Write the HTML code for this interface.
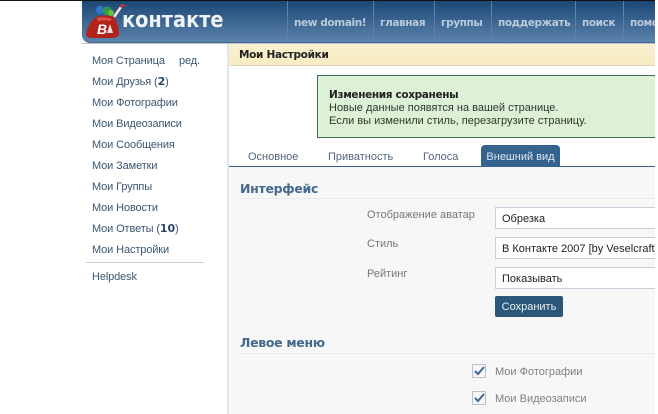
<!DOCTYPE html>
<html><head><meta charset="utf-8">
<style>
html,body{margin:0;padding:0;width:658px;height:414px;overflow:hidden;background:#fff}
body{position:relative;font-family:"Liberation Sans","DejaVu Sans",sans-serif;font-size:11px;color:#2b587a}
.a{position:absolute;white-space:nowrap}
.m{left:92px;color:#3a5670;line-height:14px;letter-spacing:-.12px}
.m b{font-family:"DejaVu Sans",sans-serif;font-size:11px;color:#2b4a6b}
.n{top:16px;font-family:"DejaVu Sans",sans-serif;font-weight:bold;font-size:10.5px;color:#b9cbdc;line-height:14px;letter-spacing:-.4px}
.s{top:1px;width:1px;height:40px;background:#5d80a3}
.t{top:150px;line-height:14px;color:#53657a}
.h{font-family:"DejaVu Sans",sans-serif;font-weight:bold;font-size:12.5px;color:#45688e;line-height:16px;left:240px;letter-spacing:-.3px}
.l{left:367px;color:#777;line-height:14px}
.i{left:495px;width:170px;height:20px;background:#fff;border:1px solid #c5d0dc;color:#222;line-height:22px;padding-left:6px;box-sizing:content-box;overflow:hidden}
.c{left:472px;width:12px;height:12px;border:1px solid #b4c3d2;background:#f4f6f8}
</style></head><body>
<div class="a" style="left:0;top:0;width:658px;height:1px;background:#111"></div>
<div class="a" style="left:82px;top:1px;width:576px;height:41px;border-bottom-left-radius:8px;background:linear-gradient(#1c4775,#5b83ab);border-bottom:1px solid #46688c"></div>
<div class="a" style="left:82px;top:43px;width:576px;height:1px;background:#b8c4d0"></div>

<svg class="a" style="left:84px;top:2px" width="42" height="38" viewBox="0 0 42 38">
<circle cx="16" cy="8" r="4" fill="#2f7ad0"/>
<circle cx="23" cy="9" r="4.5" fill="#2e9a4a"/><circle cx="27" cy="11" r="3" fill="#6cbc3c"/>
<path d="M30 15L37 5" stroke="#f2e6e6" stroke-width="2.5"/><path d="M36 5l2-2 3 1" stroke="#c33" stroke-width="2" fill="none"/>
<path d="M12 15c5-2 13-2 18 0 3 4 5 12 5 17 0 3-4 4-9 4H10c-5 0-8-1-8-3 0-6 4-13 10-18z" fill="#b2231c"/>
<path d="M13 16c4-1 10-1 15 1l-2 2c-4-1-8-1-12 0z" fill="#d9534a"/>
<text x="13" y="32" font-family="Liberation Sans" font-weight="bold" font-size="14" font-style="italic" fill="#fff">В</text>
<path d="M26 22l3 9h-6z" fill="#f5e0d8"/>
</svg>

<div class="a" style="left:122px;top:5px;font-family:'DejaVu Sans',sans-serif;font-weight:bold;font-size:22.5px;line-height:30px;color:#eef3f8;transform:scaleX(.86);transform-origin:0 0">контакте</div>

<div class="s a" style="left:287px"></div>
<div class="s a" style="left:373px"></div>
<div class="s a" style="left:434px"></div>
<div class="s a" style="left:491px"></div>
<div class="s a" style="left:575px"></div>
<div class="s a" style="left:623px"></div>
<div class="a n" style="left:294px">new domain!</div>
<div class="a n" style="left:380px">главная</div>
<div class="a n" style="left:441px">группы</div>
<div class="a n" style="left:498px">поддержать</div>
<div class="a n" style="left:582px">поиск</div>
<div class="a n" style="left:630px">помощь</div>

<div class="a m" style="top:54px">Моя Страница</div>
<div class="a m" style="top:54px;left:179px">ред.</div>
<div class="a m" style="top:75px">Мои Друзья (<b>2</b>)</div>
<div class="a m" style="top:96px">Мои Фотографии</div>
<div class="a m" style="top:117px">Мои Видеозаписи</div>
<div class="a m" style="top:138px">Мои Сообщения</div>
<div class="a m" style="top:159px">Мои Заметки</div>
<div class="a m" style="top:180px">Мои Группы</div>
<div class="a m" style="top:201px">Мои Новости</div>
<div class="a m" style="top:222px">Мои Ответы (<b>10</b>)</div>
<div class="a m" style="top:243px">Мои Настройки</div>
<div class="a" style="left:86px;top:262px;width:118px;height:1px;background:#ccc"></div>
<div class="a m" style="top:270px">Helpdesk</div>

<div class="a" style="left:227px;top:44px;width:2px;height:370px;background:#dfe6ee"></div>
<div class="a" style="left:229px;top:44px;width:429px;height:21px;background:linear-gradient(#f9f0cf,#f7ebc2);border-bottom:1px solid #dcd5b5"></div>
<div class="a" style="left:239px;top:48px;font-family:'DejaVu Sans',sans-serif;font-weight:bold;font-size:10.5px;line-height:14px;color:#222;letter-spacing:-.3px">Мои Настройки</div>

<div class="a" style="left:317px;top:75px;width:345px;height:63px;background:#dcf1d6;border:1px solid #3f6a58;box-sizing:border-box"></div>
<div class="a" style="left:329px;top:88px;font-family:'DejaVu Sans',sans-serif;font-weight:bold;font-size:10.5px;line-height:14px;color:#222;letter-spacing:-.35px">Изменения сохранены</div>
<div class="a" style="left:329px;top:101px;line-height:14px;color:#2c3a2c">Новые данные появятся на вашей странице.</div>
<div class="a" style="left:329px;top:114px;line-height:14px;color:#2c3a2c">Если вы изменили стиль, перезагрузите страницу.</div>

<div class="a" style="left:229px;top:167px;width:429px;height:247px;background:#f7f7f7"></div>
<div class="a" style="left:229px;top:166px;width:429px;height:1px;background:#36638e"></div>
<div class="a t" style="left:248px">Основное</div>
<div class="a t" style="left:328px">Приватность</div>
<div class="a t" style="left:423px">Голоса</div>
<div class="a" style="left:481px;top:145px;width:79px;height:21px;background:#36638e;border-radius:4px 4px 0 0;color:#dfe8f0;text-align:center;line-height:24px">Внешний вид</div>

<div class="a h" style="top:181px">Интерфейс</div>
<div class="a" style="left:238px;top:198px;width:420px;height:1px;background:#ebebeb"></div>
<div class="a l" style="top:208px">Отображение аватар</div>
<div class="a i" style="top:207px">Обрезка</div>
<div class="a l" style="top:237px">Стиль</div>
<div class="a i" style="top:237px">В Контакте 2007 [by Veselcraft]</div>
<div class="a l" style="top:267px">Рейтинг</div>
<div class="a i" style="top:267px">Показывать</div>
<div class="a" style="left:495px;top:296px;width:68px;height:21px;background:#2b587a;border-radius:2px;color:#e8eff5;text-align:center;line-height:22px">Сохранить</div>

<div class="a h" style="top:335px">Левое меню</div>
<div class="a" style="left:238px;top:353px;width:420px;height:1px;background:#ebebeb"></div>
<div class="a c" style="top:364px"></div>
<div class="a c" style="top:391px"></div>
<svg class="a" style="left:472px;top:364px" width="15" height="42" viewBox="0 0 15 42">
<path d="M3 7l3 3 6-7" fill="none" stroke="#45688e" stroke-width="2"/>
<path d="M3 34l3 3 6-7" fill="none" stroke="#45688e" stroke-width="2"/>
</svg>
<div class="a l" style="left:495px;top:365px;color:#808080">Мои Фотографии</div>
<div class="a l" style="left:495px;top:392px;color:#808080">Мои Видеозаписи</div>
<div class="a" style="left:655px;top:0;width:3px;height:414px;background:#fff"></div>
</body></html>
